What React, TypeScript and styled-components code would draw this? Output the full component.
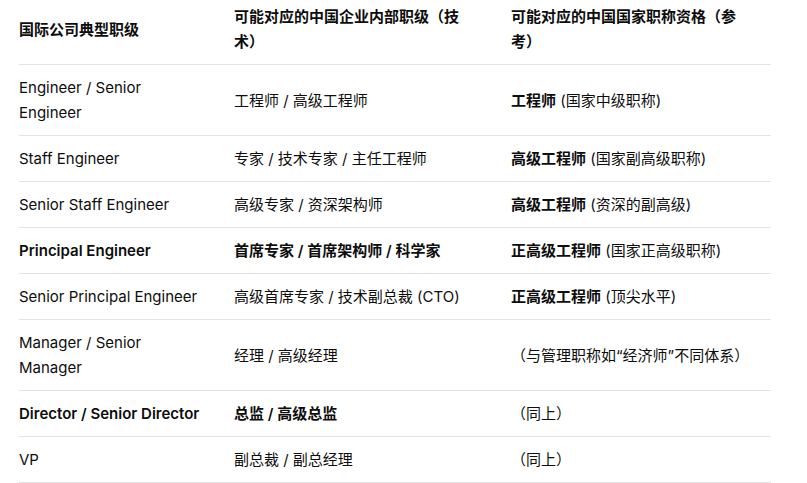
import styled, { createGlobalStyle } from 'styled-components';

const GlobalStyle = createGlobalStyle`
  html, body {
    margin: 0;
    padding: 0;
    background: #fff;
  }

  body {
    font-family: Inter, "Noto Sans CJK SC", sans-serif;
    color: #0d0d0d;
    -webkit-font-smoothing: antialiased;
  }
`;

const Page = styled.main`
  padding: 0 19px;
  width: 752px;
`;

const Table = styled.table`
  width: 752px;
  border-collapse: collapse;
  table-layout: fixed;
  font-size: 15px;
  line-height: 25px;

  col.c1 { width: 215px; }
  col.c2 { width: 277px; }
  col.c3 { width: 260px; }

  th:last-child,
  td:last-child {
    padding-right: 16px;
  }
`;

const HeadCell = styled.th`
  padding: 4px 32px 10px 0;
  border-bottom: 1px solid #e3e3e3;
  text-align: left;
  vertical-align: middle;
  font-weight: 600;
`;

const Cell = styled.td<{ $bold?: boolean }>`
  padding: 10px 32px 10px 0;
  border-bottom: 1px solid #e3e3e3;
  text-align: left;
  vertical-align: middle;
  font-weight: ${(p) => (p.$bold ? 600 : 400)};
`;

const Strong = styled.strong`
  font-weight: 600;
`;

type Row = {
  intl: string;
  corp: string;
  title?: string;
  note: string;
  bold?: boolean;
};

const rows: Row[] = [
  { intl: 'Engineer / Senior Engineer', corp: '工程师 / 高级工程师', title: '工程师', note: ' (国家中级职称)' },
  { intl: 'Staff Engineer', corp: '专家 / 技术专家 / 主任工程师', title: '高级工程师', note: ' (国家副高级职称)' },
  { intl: 'Senior Staff Engineer', corp: '高级专家 / 资深架构师', title: '高级工程师', note: ' (资深的副高级)' },
  { intl: 'Principal Engineer', corp: '首席专家 / 首席架构师 / 科学家', title: '正高级工程师', note: ' (国家正高级职称)', bold: true },
  { intl: 'Senior Principal Engineer', corp: '高级首席专家 / 技术副总裁 (CTO)', title: '正高级工程师', note: ' (顶尖水平)' },
  { intl: 'Manager / Senior Manager', corp: '经理 / 高级经理', note: '（与管理职称如“经济师”不同体系）' },
  { intl: 'Director / Senior Director', corp: '总监 / 高级总监', note: '（同上）', bold: true },
  { intl: 'VP', corp: '副总裁 / 副总经理', note: '（同上）' }
];

export default function App() {
  return (
    <>
      <GlobalStyle />
      <Page>
        <Table>
          <colgroup>
            <col className="c1" />
            <col className="c2" />
            <col className="c3" />
          </colgroup>
          <thead>
            <tr>
              <HeadCell>国际公司典型职级</HeadCell>
              <HeadCell>可能对应的中国企业内部职级（技术）</HeadCell>
              <HeadCell>可能对应的中国国家职称资格（参考）</HeadCell>
            </tr>
          </thead>
          <tbody>
            { rows.map((r, i) => (
              <tr key={ i }>
                <Cell $bold={ r.bold }>{ r.intl }</Cell>
                <Cell $bold={ r.bold }>{ r.corp }</Cell>
                <Cell>
                  { r.title && <Strong>{ r.title }</Strong> }
                  { r.note }
                </Cell>
              </tr>
            )) }
          </tbody>
        </Table>
      </Page>
    </>
  );
}
